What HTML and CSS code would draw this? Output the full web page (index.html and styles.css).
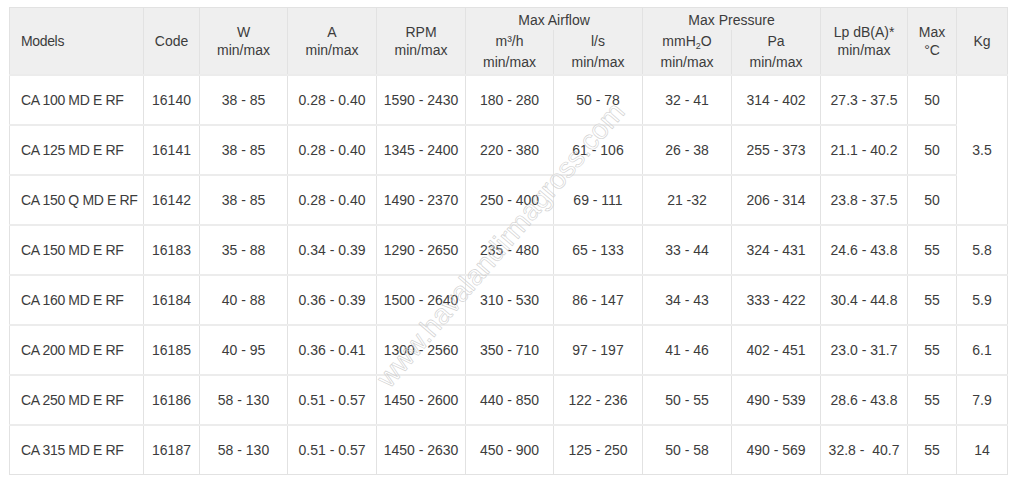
FILE: index.html
```html
<!DOCTYPE html>
<html>
<head>
<meta charset="utf-8">
<link rel="stylesheet" href="styles.css">
</head>
<body>
<div class="wrap">
<table class="spec">
<colgroup>
<col class="c-model"><col class="c-code"><col class="c-w"><col class="c-a"><col class="c-rpm"><col class="c-m3"><col class="c-ls"><col class="c-mm"><col class="c-pa"><col class="c-lp"><col class="c-max"><col class="c-kg">
</colgroup>
<thead>
<tr class="h1">
<th rowspan="2" class="left">Models</th>
<th rowspan="2">Code</th>
<th rowspan="2">W<br>min/max</th>
<th rowspan="2">A<br>min/max</th>
<th rowspan="2">RPM<br>min/max</th>
<th colspan="2" class="group">Max Airflow</th>
<th colspan="2" class="group">Max Pressure</th>
<th rowspan="2">Lp dB(A)*<br>min/max</th>
<th rowspan="2">Max<br>°C</th>
<th rowspan="2">Kg</th>
</tr>
<tr class="h2">
<th class="sub">m³/h<br>min/max</th>
<th class="sub">l/s<br>min/max</th>
<th class="sub">mmH<sub>2</sub>O<br>min/max</th>
<th class="sub">Pa<br>min/max</th>
</tr>
</thead>
<tbody>
<tr><td class="left">CA 100 MD E RF</td><td>16140</td><td>38 - 85</td><td>0.28 - 0.40</td><td>1590 - 2430</td><td>180 - 280</td><td>50 - 78</td><td>32 - 41</td><td>314 - 402</td><td>27.3 - 37.5</td><td>50</td><td rowspan="3">3.5</td></tr>
<tr><td class="left">CA 125 MD E RF</td><td>16141</td><td>38 - 85</td><td>0.28 - 0.40</td><td>1345 - 2400</td><td>220 - 380</td><td>61 - 106</td><td>26 - 38</td><td>255 - 373</td><td>21.1 - 40.2</td><td>50</td></tr>
<tr><td class="left">CA 150 Q MD E RF</td><td>16142</td><td>38 - 85</td><td>0.28 - 0.40</td><td>1490 - 2370</td><td>250 - 400</td><td>69 - 111</td><td>21 -32</td><td>206 - 314</td><td>23.8 - 37.5</td><td>50</td></tr>
<tr><td class="left">CA 150 MD E RF</td><td>16183</td><td>35 - 88</td><td>0.34 - 0.39</td><td>1290 - 2650</td><td>235 - 480</td><td>65 - 133</td><td>33 - 44</td><td>324 - 431</td><td>24.6 - 43.8</td><td>55</td><td>5.8</td></tr>
<tr><td class="left">CA 160 MD E RF</td><td>16184</td><td>40 - 88</td><td>0.36 - 0.39</td><td>1500 - 2640</td><td>310 - 530</td><td>86 - 147</td><td>34 - 43</td><td>333 - 422</td><td>30.4 - 44.8</td><td>55</td><td>5.9</td></tr>
<tr><td class="left">CA 200 MD E RF</td><td>16185</td><td>40 - 95</td><td>0.36 - 0.41</td><td>1300 - 2560</td><td>350 - 710</td><td>97 - 197</td><td>41 - 46</td><td>402 - 451</td><td>23.0 - 31.7</td><td>55</td><td>6.1</td></tr>
<tr><td class="left">CA 250 MD E RF</td><td>16186</td><td>58 - 130</td><td>0.51 - 0.57</td><td>1450 - 2600</td><td>440 - 850</td><td>122 - 236</td><td>50 - 55</td><td>490 - 539</td><td>28.6 - 43.8</td><td>55</td><td>7.9</td></tr>
<tr><td class="left">CA 315 MD E RF</td><td>16187</td><td>58 - 130</td><td>0.51 - 0.57</td><td>1450 - 2630</td><td>450 - 900</td><td>125 - 250</td><td>50 - 58</td><td>490 - 569</td><td>32.8 -&nbsp; 40.7</td><td>55</td><td>14</td></tr>
</tbody>
</table>
<div class="watermark">www.havalandirmagross.com</div>
</div>
</body>
</html>
```

FILE: styles.css
```css
html, body {
  margin: 0;
  padding: 0;
  background: #ffffff;
}
.wrap {
  position: relative;
  padding: 7px 9px;
  font-family: "Liberation Sans", Arial, sans-serif;
  font-size: 14px;
  color: #3c3c3c;
}
.spec {
  border-collapse: collapse;
  table-layout: fixed;
  width: 998px;
}
.c-model { width: 134px; }
.c-code { width: 56px; }
.c-w { width: 88px; }
.c-a { width: 89px; }
.c-rpm { width: 89px; }
.c-m3 { width: 88px; }
.c-ls { width: 89px; }
.c-mm { width: 89px; }
.c-pa { width: 89px; }
.c-lp { width: 87px; }
.c-max { width: 49px; }
.c-kg { width: 51px; }

.spec th, .spec td {
  border: 1px solid #e2e2e2;
  text-align: center;
  vertical-align: middle;
  padding: 0 3px;
  font-weight: normal;
  white-space: nowrap;
  overflow: hidden;
}
.spec th {
  background: #efefef;
  line-height: 18px;
}
.spec .left {
  text-align: left;
  padding-left: 11px;
  letter-spacing: -0.35px;
}
.h1 th {
  height: 22px;
}
.h1 th.group {
  border-bottom: none;
  vertical-align: bottom;
  padding-bottom: 0;
  line-height: 20px;
}
.h2 th {
  height: 43px;
  border-top: none;
}
.h2 th.sub {
  line-height: 21px;
  vertical-align: top;
  padding-top: 1px;
}
.sub sub {
  font-size: 9px;
  vertical-align: -3px;
  line-height: 0;
}
.spec td {
  height: 48px;
  border-top: 2px solid #ececec;
}
.watermark {
  position: absolute;
  left: 501px;
  top: 245px;
  transform: translate(-50%, -50%) rotate(-49.5deg);
  font-family: "Liberation Sans", Arial, sans-serif;
  font-size: 28px;
  color: transparent;
  -webkit-text-stroke: 0.6px #cfcfcf;
  white-space: nowrap;
  pointer-events: none;
}
```
